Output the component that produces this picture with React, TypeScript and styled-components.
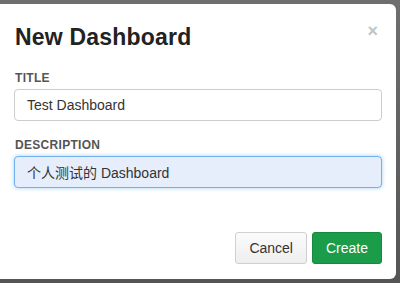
import { useEffect, useRef } from "react";
import styled, { createGlobalStyle } from "styled-components";

const GlobalStyle = createGlobalStyle`
  html, body {
    margin: 0;
    padding: 0;
    background: #5b5b5b;
  }
  body {
    font-family: "Liberation Sans", Arial, "Noto Sans CJK SC", sans-serif;
  }
`;

const Backdrop = styled.div`
  width: 400px;
  height: 283px;
  overflow: hidden;
  background: linear-gradient(#6e6e6e, #555555);
  padding: 4px 4px 4px 0;
  box-sizing: border-box;
`;

const Modal = styled.div`
  height: 275px;
  background: #ffffff;
  border-radius: 0 6px 6px 0;
  display: flex;
  flex-direction: column;
  box-sizing: border-box;
`;

const ModalHeader = styled.div`
  display: flex;
  justify-content: space-between;
  align-items: flex-start;
  padding: 17px 18px 0 15px;
`;

const Heading = styled.h3`
  margin: 0;
  font-size: 23px;
  line-height: 32px;
  font-weight: bold;
  letter-spacing: 0.2px;
  color: #222222;
`;

const Close = styled.span`
  color: #c4c4c4;
  font-size: 18px;
  font-weight: bold;
  line-height: 18px;
  margin-top: 1px;
`;

const Body = styled.div`
  display: flex;
  flex-direction: column;
  padding: 18px 14px 0 14px;
  flex: 1;
`;

const Field = styled.div`
  display: flex;
  flex-direction: column;
  margin-bottom: 17px;
`;

const Label = styled.label`
  font-size: 12px;
  font-weight: bold;
  color: #555555;
  letter-spacing: 0.3px;
  margin: 0 0 4px 1px;
  line-height: 14px;
`;

const Input = styled.input`
  height: 32px;
  box-sizing: border-box;
  border: 1px solid #cccccc;
  border-radius: 4px;
  padding: 0 12px;
  font-family: "Liberation Sans", Arial, "Noto Sans CJK SC", sans-serif;
  font-size: 14px;
  color: #333333;
  background: #ffffff;
  outline: none;

  &:focus {
    border-color: #74b0ec;
    background: #e6eefc;
    box-shadow: 0 0 4px rgba(102, 175, 233, 0.6);
  }
`;

const Footer = styled.div`
  display: flex;
  justify-content: flex-end;
  gap: 5px;
  padding: 0 14px 15px 0;
`;

const Button = styled.button<{ $primary?: boolean }>`
  height: 32px;
  padding: 0 13px;
  border-radius: 3px;
  font-family: "Liberation Sans", Arial, sans-serif;
  font-size: 14px;
  border: 1px solid ${(p) => (p.$primary ? "#168a3e" : "#d0d0d0")};
  background: ${(p) =>
    p.$primary ? "#1a9c48" : "linear-gradient(#fbfbfb, #eeeeee)"};
  color: ${(p) => (p.$primary ? "#ffffff" : "#333333")};
`;

export default function App() {
  const descRef = useRef<HTMLInputElement>(null);

  useEffect(() => {
    const el = descRef.current;
    if (el) {
      el.focus();
      el.setSelectionRange(el.value.length, el.value.length);
    }
  }, []);

  return (
    <>
      <GlobalStyle />
      <Backdrop>
        <Modal>
          <ModalHeader>
            <Heading>New Dashboard</Heading>
            <Close>×</Close>
          </ModalHeader>
          <Body>
            <Field>
              <Label>TITLE</Label>
              <Input defaultValue="Test Dashboard" />
            </Field>
            <Field>
              <Label>DESCRIPTION</Label>
              <Input ref={descRef} defaultValue="个人测试的 Dashboard" />
            </Field>
          </Body>
          <Footer>
            <Button>Cancel</Button>
            <Button $primary>Create</Button>
          </Footer>
        </Modal>
      </Backdrop>
    </>
  );
}
